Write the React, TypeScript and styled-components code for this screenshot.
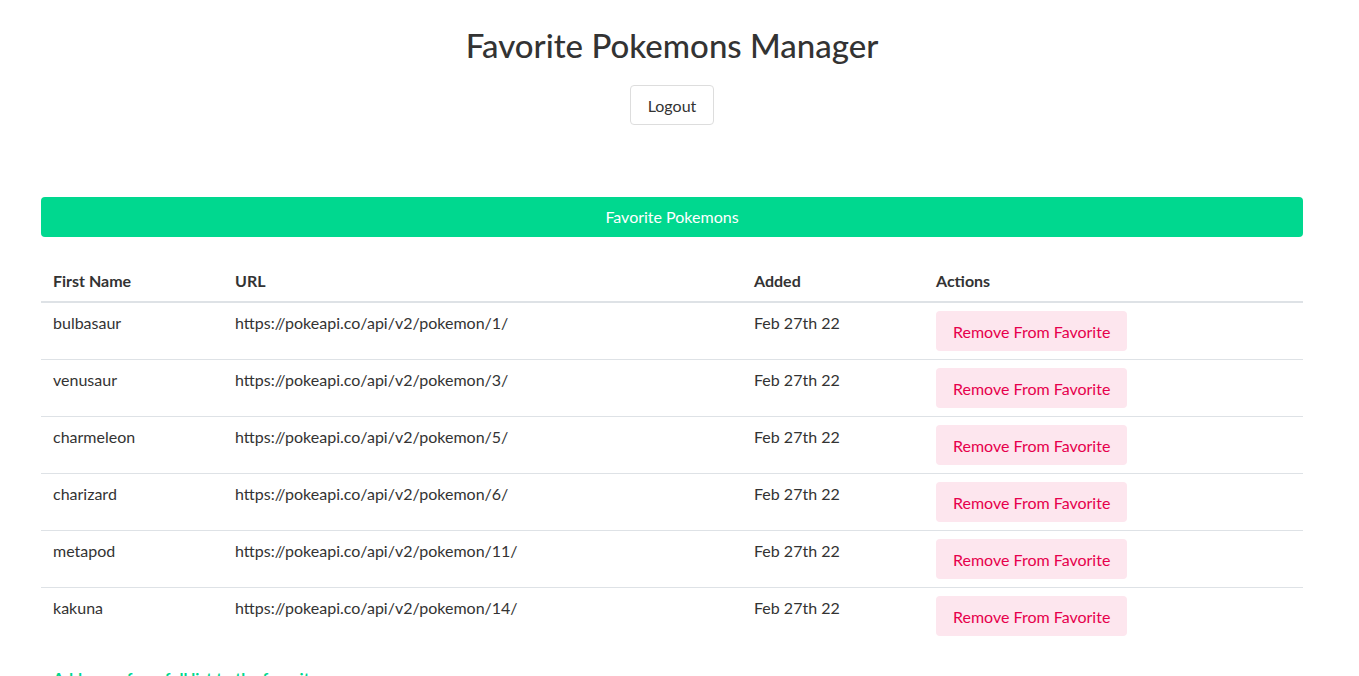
import React from "react";
import styled, { createGlobalStyle } from "styled-components";

const GlobalStyle = createGlobalStyle`
  html, body {
    margin: 0;
    padding: 0;
    background: #ffffff;
  }
  body {
    font-family: "Segoe UI", Lato, "Noto Sans", Arial, sans-serif;
    font-size: 16px;
    line-height: 24px;
    color: #333333;
  }
`;

const Page = styled.div`
  width: 1344px;
  box-sizing: border-box;
  padding: 26px 41px 0;
  display: flex;
  flex-direction: column;
  align-items: center;
`;

const Title = styled.h1`
  margin: 0;
  font-size: 33px;
  line-height: 38px;
  font-weight: 500;
  color: #333333;
`;

const LogoutButton = styled.button`
  margin-top: 21px;
  height: 40px;
  padding: 0 17px;
  font-family: inherit;
  font-size: 16px;
  color: #333333;
  background: #ffffff;
  border: 1px solid #dddddd;
  border-radius: 4px;
  cursor: pointer;
`;

const Banner = styled.div`
  margin-top: 72px;
  width: 100%;
  height: 40px;
  display: flex;
  align-items: center;
  justify-content: center;
  background: #00d88f;
  color: #ffffff;
  border-radius: 4px;
  font-size: 16px;
`;

const Table = styled.table`
  margin-top: 24px;
  width: 100%;
  border-collapse: collapse;
  table-layout: fixed;
`;

const HeadCell = styled.th`
  text-align: left;
  font-weight: 700;
  padding: 8px 12px;
  line-height: 24px;
  border-bottom: 2px solid #dee2e6;
`;

const Row = styled.tr`
  border-bottom: 1px solid #dee2e6;
  &:last-child {
    border-bottom: none;
  }
`;

const Cell = styled.td`
  padding: 8px 12px;
  vertical-align: top;
  line-height: 24px;
`;

const RemoveButton = styled.button`
  height: 40px;
  padding: 0 17px;
  font-family: inherit;
  font-size: 16px;
  color: #e6004c;
  background: #fde6ee;
  border: none;
  border-radius: 4px;
  cursor: pointer;
`;

const FooterLink = styled.a`
  align-self: flex-start;
  margin-top: 22px;
  padding-left: 12px;
  font-weight: 700;
  color: #00d88f;
  text-decoration: none;
`;

const pokemons = [
  { name: "bulbasaur", id: 1 },
  { name: "venusaur", id: 3 },
  { name: "charmeleon", id: 5 },
  { name: "charizard", id: 6 },
  { name: "metapod", id: 11 },
  { name: "kakuna", id: 14 },
];

export default function App() {
  return (
    <>
      <GlobalStyle />
      <Page>
        <Title>Favorite Pokemons Manager</Title>
        <LogoutButton>Logout</LogoutButton>
        <Banner>Favorite Pokemons</Banner>
        <Table>
          <colgroup>
            <col style={{ width: 182 }} />
            <col style={{ width: 519 }} />
            <col style={{ width: 182 }} />
            <col style={{ width: 379 }} />
          </colgroup>
          <thead>
            <tr>
              <HeadCell>First Name</HeadCell>
              <HeadCell>URL</HeadCell>
              <HeadCell>Added</HeadCell>
              <HeadCell>Actions</HeadCell>
            </tr>
          </thead>
          <tbody>
            {pokemons.map((p) => (
              <Row key={p.id}>
                <Cell>{p.name}</Cell>
                <Cell>{`https://pokeapi.co/api/v2/pokemon/${p.id}/`}</Cell>
                <Cell>Feb 27th 22</Cell>
                <Cell>
                  <RemoveButton>Remove From Favorite</RemoveButton>
                </Cell>
              </Row>
            ))}
          </tbody>
        </Table>
        <FooterLink href="#">Add more from full list to the favorites</FooterLink>
      </Page>
    </>
  );
}
